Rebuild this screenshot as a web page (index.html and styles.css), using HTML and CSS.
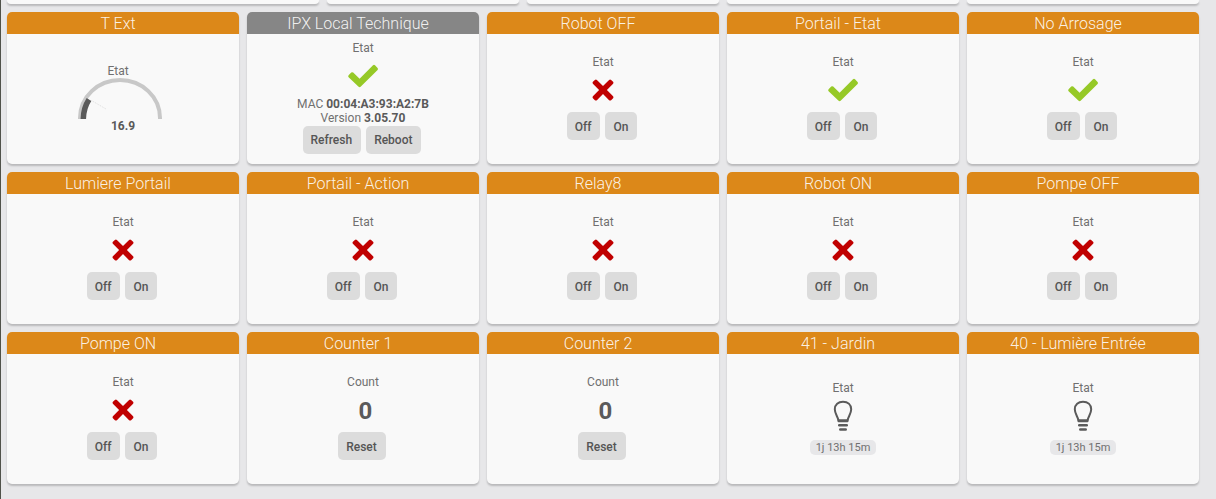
FILE: index.html
```html
<!DOCTYPE html>
<html lang="fr">
<head>
<meta charset="utf-8">
<title>Dashboard</title>
<link rel="stylesheet" href="styles.css">
</head>
<body>
<svg class="sprite" aria-hidden="true">
  <symbol id="check" viewBox="0 0 32 24"><path d="M1.6 11.2 4.2 8.6Q5.2 7.7 6.2 8.6L12.6 14.7 26 1.3Q27 .4 28 1.3L30.6 3.9Q31.4 4.9 30.6 5.900L13.600 22.800Q12.600 23.600 11.600 22.800L1.600 13.200Q.700 12.200 1.600 11.200Z"/></symbol>
  <symbol id="cross" viewBox="0 0 22 22"><path d="M.9 4.700Q.100 3.700.900 2.700L2.900.900Q3.900.100 4.900.900L11 6.900 17.100.900Q18.100.100 19.100.900L21.100 2.700Q21.900 3.700 21.100 4.700L14.900 11 21.100 17.300Q21.900 18.300 21.100 19.300L19.100 21.200Q18.100 21.900 17.100 21.200L11 15.100 4.900 21.200Q3.900 21.900 2.900 21.200L.900 19.300Q.100 18.300.900 17.300L7.100 11Z"/></symbol>
  <symbol id="bulb" viewBox="0 0 20 32"><path d="M5.500 20.700C5 16.500 1.800 14 1.800 9.300C1.800 4.500 5.300 1.800 10 1.800S18.200 4.500 18.200 9.300C18.200 14 15 16.500 14.500 20.700" fill="none" stroke="currentColor" stroke-width="2"/><path d="M4.500 19.300h11v2q0 1-1 1h-9q-1 0-1-1z"/><rect x="5" y="24" width="10" height="2.600" rx="1.300"/><rect x="6" y="28.200" width="8" height="2.600" rx="1.300"/></symbol>
</svg>
<main class="dashboard">
  <div class="previous">
    <div class="card-end wide"></div><div class="card-end medium"></div><div class="card-end medium"></div><div class="card-end"></div><div class="card-end"></div>
  </div>
  <div class="grid">
    <section class="card">
      <h2 class="title">T Ext</h2>
      <div class="content">
        <p class="label gauge-label">Etat</p>
        <svg class="gauge" viewBox="0 0 84 41" role="img" aria-label="16.9"><path d="M2 41v-1A40 38 0 0 1 82 40v1" fill="none" stroke="#c8c8c8" stroke-width="4"/><path d="M5.300 41Q5.500 30 11 21.500" fill="none" stroke="#5a5a5a" stroke-width="5.500"/><path d="M13.500 22.500 28 31" stroke="#dedede" stroke-width="1" stroke-dasharray="1 1"/></svg>
        <p class="gauge-value">16.9</p>
      </div>
    </section>
    <section class="card">
      <h2 class="title system">IPX Local Technique</h2>
      <div class="content">
        <p class="label">Etat</p>
        <svg class="icon check"><use href="#check"/></svg>
        <p class="label">MAC <strong>00:04:A3:93:A2:7B</strong></p>
        <p class="label">Version <strong>3.05.70</strong></p>
        <div class="actions close"><button>Refresh</button><button>Reboot</button></div>
      </div>
    </section>
    <section class="card">
      <h2 class="title">Robot OFF</h2>
      <div class="content"><p class="label">Etat</p><svg class="icon cross"><use href="#cross"/></svg><div class="actions"><button>Off</button><button>On</button></div></div>
    </section>
    <section class="card">
      <h2 class="title">Portail - Etat</h2>
      <div class="content"><p class="label">Etat</p><svg class="icon check"><use href="#check"/></svg><div class="actions"><button>Off</button><button>On</button></div></div>
    </section>
    <section class="card">
      <h2 class="title">No Arrosage</h2>
      <div class="content"><p class="label">Etat</p><svg class="icon check"><use href="#check"/></svg><div class="actions"><button>Off</button><button>On</button></div></div>
    </section>
    <section class="card">
      <h2 class="title">Lumiere Portail</h2>
      <div class="content"><p class="label">Etat</p><svg class="icon cross"><use href="#cross"/></svg><div class="actions"><button>Off</button><button>On</button></div></div>
    </section>
    <section class="card">
      <h2 class="title">Portail - Action</h2>
      <div class="content"><p class="label">Etat</p><svg class="icon cross"><use href="#cross"/></svg><div class="actions"><button>Off</button><button>On</button></div></div>
    </section>
    <section class="card">
      <h2 class="title">Relay8</h2>
      <div class="content"><p class="label">Etat</p><svg class="icon cross"><use href="#cross"/></svg><div class="actions"><button>Off</button><button>On</button></div></div>
    </section>
    <section class="card">
      <h2 class="title">Robot ON</h2>
      <div class="content"><p class="label">Etat</p><svg class="icon cross"><use href="#cross"/></svg><div class="actions"><button>Off</button><button>On</button></div></div>
    </section>
    <section class="card">
      <h2 class="title">Pompe OFF</h2>
      <div class="content"><p class="label">Etat</p><svg class="icon cross"><use href="#cross"/></svg><div class="actions"><button>Off</button><button>On</button></div></div>
    </section>
    <section class="card">
      <h2 class="title">Pompe ON</h2>
      <div class="content"><p class="label">Etat</p><svg class="icon cross"><use href="#cross"/></svg><div class="actions"><button>Off</button><button>On</button></div></div>
    </section>
    <section class="card">
      <h2 class="title">Counter 1</h2>
      <div class="content"><p class="label">Count</p><p class="count">0</p><div class="actions"><button>Reset</button></div></div>
    </section>
    <section class="card">
      <h2 class="title">Counter 2</h2>
      <div class="content"><p class="label">Count</p><p class="count">0</p><div class="actions"><button>Reset</button></div></div>
    </section>
    <section class="card">
      <h2 class="title">41 - Jardin</h2>
      <div class="content"><p class="label">Etat</p><svg class="icon bulb"><use href="#bulb"/></svg><span class="duration">1j 13h 15m</span></div>
    </section>
    <section class="card">
      <h2 class="title">40 - Lumière Entrée</h2>
      <div class="content"><p class="label">Etat</p><svg class="icon bulb"><use href="#bulb"/></svg><span class="duration">1j 13h 15m</span></div>
    </section>
  </div>
</main>
</body>
</html>
```
FILE: styles.css
```css
* { box-sizing: border-box; }
body {
  margin: 0;
  background: #e7e7e9;
  color: #707070;
  font: 12px/14px Roboto, sans-serif;
}
h2, p { margin: 0; }
.sprite { display: none; }
.dashboard {
  min-height: 100vh;
  padding: 0 17px 14px 6px;
  border-left: 1px solid #50524a;
}
.previous, .grid {
  display: grid;
  gap: 8px;
}
.previous {
  grid-template-columns: repeat(30, minmax(0, 1fr));
  margin-bottom: 8px;
}
.card-end {
  grid-column: span 6;
  height: 4px;
  background: #f9f9f9;
  border-radius: 0 0 5px 5px;
  box-shadow: 0 2px 2px rgba(0, 0, 0, .2);
}
.card-end.wide { grid-column: span 8; }
.card-end.medium { grid-column: span 5; }
.grid { grid-template-columns: repeat(5, minmax(0, 1fr)); }
.card {
  display: flex;
  flex-direction: column;
  min-height: 152px;
  background: #f9f9f9;
  border-radius: 5px;
  box-shadow: 0 2px 2px rgba(0, 0, 0, .2);
}
.title {
  padding: 2px 10px 0 0;
  background: #dc8819;
  border-radius: 5px 5px 0 0;
  color: rgba(255, 255, 255, .9);
  font-size: 16px;
  font-weight: 300;
  line-height: 20px;
  text-align: center;
}
.title.system { background: #868686; }
.content {
  flex: 1;
  display: flex;
  flex-direction: column;
  align-items: center;
  justify-content: center;
  padding-bottom: 3px;
}
strong { color: #5a5a5a; font-weight: 700; }
.icon { display: block; fill: currentColor; }
.check { width: 32px; height: 24px; margin: 9px 0; color: #96c927; }
.cross { width: 22px; height: 22px; margin: 10px 0; color: #c00000; }
.bulb { width: 20px; height: 32px; margin: 5px 0 8px; color: #5a5a5a; }
.actions {
  display: flex;
  gap: 5px;
  margin-top: 1px;
  padding-right: 2px;
}
.actions.close { margin-bottom: 1px; }
button {
  height: 28px;
  padding: 1px 9px 0 8px;
  border: 0;
  border-radius: 5px;
  background: #dcdcdc;
  color: #555;
  font: 500 12px/14px Roboto, sans-serif;
}
.count {
  padding: 8px 0 6px 5px;
  color: #5a5a5a;
  font-size: 24px;
  font-weight: 700;
  line-height: 28px;
}
.duration {
  padding: 1px 6px 0;
  border-radius: 5px;
  background: #e7e7e9;
  font-size: 11px;
}
.gauge-label { padding: 2px 10px 0 0; }
.gauge { width: 84px; height: 41px; margin-right: 6px; }
.gauge-value { color: #5a5a5a; font-weight: 700; }
```
